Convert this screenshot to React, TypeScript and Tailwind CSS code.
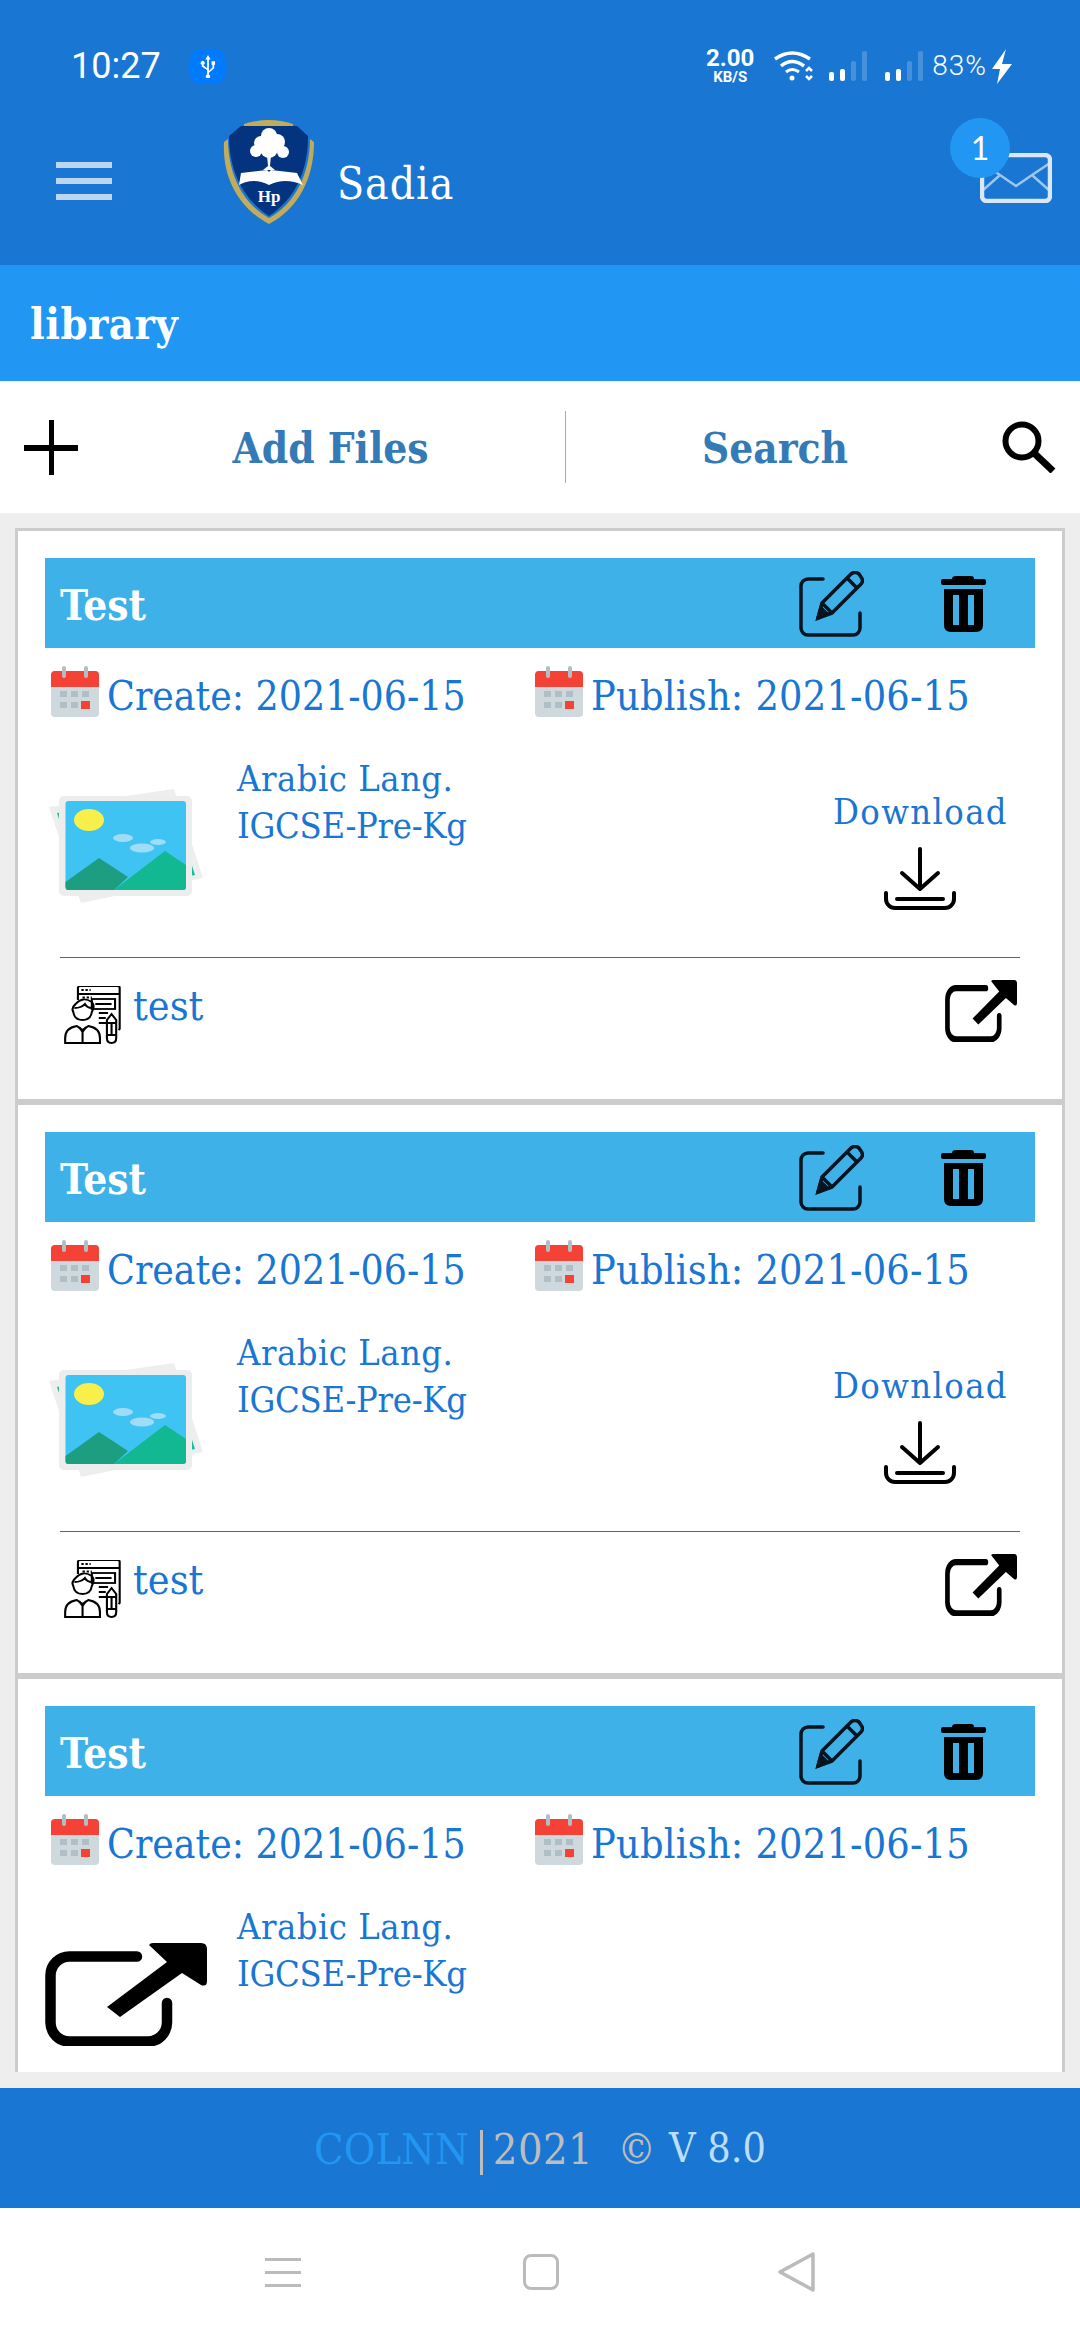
const Logo = () => (
  <svg viewBox="0 0 92 105" className="w-[92px] h-[105px]">
    <path d="M21 5 Q46 -3 70 5 L70 7 L21 7Z" fill="#c2ab5b" />
    <path d="M1 23 L5 20 C5 55 20 85 46 99 C72 85 87 55 87 20 L91 23 C91 60 75 90 46 105 C17 90 -1 60 1 23Z" fill="#c2ab5b" />
    <path d="M6 17 L18 7 L74 7 L85 17 C85 52 72 80 46 97 C20 80 6 52 6 17Z" fill="#04347f" />
    <g fill="#fff">
      <circle cx="46" cy="17" r="8" />
      <circle cx="38" cy="24" r="7" />
      <circle cx="54" cy="23" r="8" />
      <circle cx="33" cy="32" r="6" />
      <circle cx="60" cy="33" r="6" />
      <circle cx="46" cy="30" r="9" />
      <path d="M44 36 L48 36 L47 47 L52 51 L40 51 L45 47Z" />
      <path d="M18 54 L44 51 L46 53 L48 51 L74 54 L80 66 Q62 58 46 66 Q30 58 16 66Z" />
    </g>
    <text x="46" y="83" textAnchor="middle" fontSize="17" fill="#fff" fontFamily="'Liberation Serif',serif" fontWeight="700">Hp</text>
  </svg>
);

const Signal = () => (
  <div className="flex items-end gap-[6px] h-[30px]">
    <div className="w-[5px] h-[9px] rounded-[2px] bg-white" />
    <div className="w-[5px] h-[12px] rounded-[2px] bg-white" />
    <div className="w-[5px] h-[20px] rounded-[2px] bg-white/20" />
    <div className="w-[5px] h-[30px] rounded-[2px] bg-white/20" />
  </div>
);

const StatusBar = () => (
  <div className="flex items-center h-[62px] mt-[35px] pl-[71px] text-white font-['Roboto',sans-serif]">
    <span className="text-[36px] leading-none w-[119px]">10:27</span>
    <div className="w-[35px] h-[35px] rounded-[10px] bg-[#007aff] flex items-center justify-center">
      <svg viewBox="0 0 18 26" className="w-[16px] h-[23px]" fill="#fff">
        <path d="M9 0 L12 5 L10 5 L10 18 L14 14 L14 11 L13 11 L13 7 L17 7 L17 11 L16 11 L16 15 L10 20 L10 22 A2.500 2.500 0 1 1 8 22 L8 17 L2 13 L2 11 A2.200 2.200 0 1 1 4 11 L4 12 L8 15 L8 5 L6 5Z" />
      </svg>
    </div>
    <div className="flex flex-col items-center ml-auto w-[48px] font-bold">
      <span className="text-[24px] leading-[23px]">2.00</span>
      <span className="text-[15px] leading-[15px]">KB/S</span>
    </div>
    <svg viewBox="0 0 40 30" className="w-[40px] h-[30px] ml-[20px] mr-[15px]" fill="none" stroke="#fff" strokeWidth="3.500">
      <path d="M1 8 Q18 -4 36 8" />
      <path d="M7 15 Q18 6 30 15" />
      <path d="M12 21 Q18 16 25 21" strokeWidth="3" />
      <circle cx="18" cy="27" r="2.500" fill="#fff" stroke="none" />
      <path d="M32 20 L35 17 L38 20 M32 25 L35 28 L38 25" strokeWidth="2.500" />
    </svg>
    <Signal />
    <div className="w-[18px]" />
    <Signal />
    <span className="text-[28px] font-light leading-none ml-[9px] tracking-[1px]">83%</span>
    <svg viewBox="0 0 20 35" className="w-[20px] h-[35px] ml-[5px] mr-[68px]" fill="#fff">
      <path d="M14 0 L10 15 L20 15 L5 35 L8 20 L0 20Z" />
    </svg>
  </div>
);

const Toolbar = () => (
  <div className="flex items-center h-[168px] pl-[56px] pr-[28px] text-white">
    <div className="flex flex-col gap-[10px] w-[56px]">
      <div className="h-[6px] bg-[#bcd5f0]" />
      <div className="h-[6px] bg-[#bcd5f0]" />
      <div className="h-[6px] bg-[#bcd5f0]" />
    </div>
    <div className="ml-[111px] mb-[19px]">
      <Logo />
    </div>
    <span className="ml-[22px] mt-[5px] text-[44px] tracking-[1px] font-['DejaVu_Serif_Condensed',serif]">Sadia</span>
    <div className="relative ml-auto mt-[-18px]">
      <svg viewBox="0 0 72 50" className="w-[72px] h-[50px] mt-[12px]" fill="none" stroke="#d9e8f8" strokeWidth="4.500">
        <rect x="2" y="2" width="68" height="46" rx="5" />
        <path d="M2 38 L20 22 L36 33 L52 22 L70 38 M2 10 L20 22 M70 10 L52 22" strokeWidth="2.500" opacity="0.7" />
      </svg>
      <div className="absolute left-[-30px] top-[-23px] w-[60px] h-[60px] rounded-full bg-[#2196f3] flex items-center justify-center text-[32px] font-['Lato',sans-serif]">
        1
      </div>
    </div>
  </div>
);

const Calendar = () => (
  <svg viewBox="0 0 50 51" className="w-[50px] h-[51px] shrink-0">
    <rect x="1" y="5" width="48" height="46" rx="4" fill="#cfd8dc" />
    <path d="M1 21 V9 a4 4 0 0 1 4 -4 H45 a4 4 0 0 1 4 4 V21Z" fill="#f44336" />
    <rect x="12" y="0" width="4" height="12" rx="2" fill="#b0bec5" />
    <rect x="34" y="0" width="4" height="12" rx="2" fill="#b0bec5" />
    <g fill="#b0bec5">
      <rect x="10" y="25" width="7" height="6" />
      <rect x="21" y="25" width="7" height="6" />
      <rect x="32" y="25" width="7" height="6" />
      <rect x="10" y="36" width="7" height="6" />
      <rect x="21" y="36" width="7" height="6" />
    </g>
    <rect x="31" y="35" width="9" height="8" fill="#f44336" />
  </svg>
);

const Gallery = () => (
  <svg viewBox="0 0 165 125" className="w-[165px] h-[125px] mt-[55px]">
    <path d="M4 22 L129 4 L158 93 L36 118Z" fill="#eeeeee" />
    <path d="M12 28 L125 12 L150 90 L40 110Z" fill="#1abc9c" />
    <rect x="14" y="11" width="133" height="100" rx="5" fill="#ededed" />
    <rect x="20.500" y="16" width="120.500" height="89" rx="3" fill="#3fc3f3" />
    <ellipse cx="44" cy="35" rx="15" ry="11" fill="#f8ef4a" />
    <ellipse cx="78" cy="53" rx="10" ry="4" fill="#9fdcf6" />
    <ellipse cx="97" cy="63" rx="12" ry="4.500" fill="#9fdcf6" />
    <ellipse cx="113" cy="57" rx="8" ry="3" fill="#9fdcf6" />
    <path d="M20.500 97 L54 73 L83 92 L69 105 L23 105 Q20.500 105 20.500 102Z" fill="#1d9e81" />
    <path d="M69 105 L120 66 L141 80 L141 102 Q141 105 138 105Z" fill="#12b892" />
  </svg>
);

const Teacher = () => (
  <svg viewBox="0 0 50 58" preserveAspectRatio="none" className="w-[58px] h-[58px] shrink-0" fill="none" stroke="#000" strokeWidth="1.800">
    <path d="M12 14 V2 a2 2 0 0 1 2 -2 H46 a2 2 0 0 1 2 2 V43 L47 44" />
    <path d="M12 8 H48" />
    <path d="M15 4 H23 M16 11.500 H24" strokeDasharray="2 1.500" />
    <rect x="24" y="13" width="20" height="10" />
    <path d="M27 18 H41 M30 27 H38 M30 32 H36 M30 37 H37" />
    <path d="M10 18 Q16 10 24 16 Q27 20 24 26 Q23 34 16 34 Q9 34 8 26 Q6 22 10 18Z" />
    <path d="M9 22 Q15 22 18 18 Q20 22 24 22" />
    <path d="M1 57 V52 Q1 42 11 40 L16 44 L21 40 Q31 42 31 52 V57Z" />
    <path d="M13 41 L16 46 L19 41 M16 46 V57" />
    <path d="M37 34 L41 28 L45 34 V52 Q45 57 41 57 Q37 57 37 52Z" />
    <path d="M37 37 H45 M37 49 H45 M41 37 V49" />
  </svg>
);

const Share = ({ className }: { className: string }) => (
  <svg viewBox="0 0 162 103" preserveAspectRatio="none" className={className}>
    <path d="M92 13.500 H25 a19 19 0 0 0 -19.500 19 V79 a19 19 0 0 0 19.500 19.500 H103 a19 19 0 0 0 19 -19.500 V60" fill="none" stroke="#000" strokeWidth="10.500" strokeLinecap="round" />
    <path d="M104 2 Q105 0 108 0 H156 Q162 0 162 6 V38 Q162 44 156 42 L137 30 L75 74 L62 64 L122 19Z" fill="#000" />
  </svg>
);

const Edit = () => (
  <svg viewBox="0 0 65 66" className="w-[65px] h-[66px]" fill="none" stroke="#05141f" strokeWidth="3.500">
    <path d="M24 8 H9 a7 7 0 0 0 -7 7 V57 a7 7 0 0 0 7 7 H54 a7 7 0 0 0 7 -7 V42" strokeLinecap="round" />
    <path d="M19 47 L23 32 L52 3 Q56 0 60 3 L62 6 Q65 10 62 13 L33 42Z M23 32 L33 42 M48 7 L58 17" strokeLinejoin="round" />
    <path d="M19 47 L22 37 L28 43Z" fill="#05141f" />
  </svg>
);

const Trash = () => (
  <svg viewBox="0 0 45 56" className="w-[45px] h-[56px]">
    <path d="M11 3 Q11 0 15 0 H30 Q33 0 33 3Z" fill="#000" />
    <rect x="0" y="3" width="45" height="6" rx="2" fill="#000" />
    <path fillRule="evenodd" d="M3 13 H42 V49 Q42 56 35 56 H10 Q3 56 3 49Z M12 19 V49 H18 V19Z M27 19 V49 H33 V19Z" fill="#000" />
  </svg>
);

const Download = () => (
  <svg viewBox="0 0 72 63" className="w-[72px] h-[63px]" fill="none" stroke="#000" strokeWidth="4" strokeLinecap="round" strokeLinejoin="round">
    <path d="M36 2 V42 M18 26 L36 42 L54 26" />
    <path d="M2 46 V52 a9 9 0 0 0 9 9 H61 a9 9 0 0 0 9 -9 V46" />
    <path d="M13 52 H59" />
  </svg>
);

const serif = "font-['DejaVu_Serif_Condensed',serif]";

const FileCard = ({ clipped }: { clipped?: boolean }) => (
  <div className="h-[574px] shrink-0 border-[3px] border-[#ccc] bg-white px-[27px] pt-[27px]">
    <div className="flex items-center h-[90px] bg-[#3fb1e9] pl-[15px] pr-[49px]">
      <span className={`${serif} text-white font-bold text-[42px] leading-none mt-[5px]`}>Test</span>
      <div className="ml-auto mt-[2px]">
        <Edit />
      </div>
      <div className="ml-[77px] mt-[2px]">
        <Trash />
      </div>
    </div>
    <div className="grid grid-cols-[489px_1fr] h-[82px] pt-[18px] text-[#1976d2] leading-[61px]">
      <div className="flex gap-[7px] pl-[5px]">
        <Calendar />
        <span className={`${serif} whitespace-nowrap text-[40.5px]`}>Create: 2021-06-15</span>
      </div>
      <div className="flex gap-[7px]">
        <Calendar />
        <span className={`${serif} whitespace-nowrap text-[41px] tracking-[0.2px]`}>Publish: 2021-06-15</span>
      </div>
    </div>
    <div className="flex h-[227px]">
      <div className="w-[192px] shrink-0">
        {clipped ? <Share className="w-[162px] h-[103px] mt-[65px] block" /> : <Gallery />}
      </div>
      <div className={`${serif} text-[#1976d2] text-[36px] leading-[46px] pt-[26px]`}>
        <div className="tracking-[0.5px]">Arabic Lang.</div>
        <div className="tracking-[-0.3px] mt-[1px]">IGCSE-Pre-Kg</div>
      </div>
      {!clipped && (
        <div className="ml-auto mr-[27px] flex flex-col items-center pt-[59px]">
          <span className={`${serif} text-[#1976d2] text-[36px] tracking-[1.4px] leading-[46px]`}>Download</span>
          <div className="mt-[12px]">
            <Download />
          </div>
        </div>
      )}
    </div>
    {!clipped && (
      <div className="mx-[15px] border-t border-[#1976d2] pt-[28px] flex items-start">
        <div className="ml-[4px]">
          <Teacher />
        </div>
        <span className={`${serif} ml-[11px] text-[#1976d2] text-[41px] leading-[40px]`}>test</span>
        <div className="ml-auto mr-[3px] mt-[-6px]">
          <Share className="w-[72px] h-[62px] block" />
        </div>
      </div>
    )}
  </div>
);

export default function App() {
  return (
    <div className="w-[1080px] h-[2340px] flex flex-col overflow-hidden bg-white">
      <div className="h-[265px] shrink-0 bg-[#1976d2] flex flex-col">
        <StatusBar />
        <Toolbar />
      </div>
      <div className="h-[116px] shrink-0 bg-[#2196f3] flex items-center pl-[30px]">
        <span className={`${serif} text-white font-bold text-[43px] tracking-[0.5px] mt-[3px]`}>library</span>
      </div>
      <div className="h-[132px] shrink-0 bg-white flex items-center relative">
        <svg viewBox="0 0 54 55" className="w-[54px] h-[55px] ml-[24px] shrink-0" fill="#000">
          <rect x="0" y="25" width="54" height="6" />
          <rect x="25" y="0" width="5" height="55" />
        </svg>
        <div className={`${serif} flex-1 text-center text-[#337ab7] font-bold text-[42px] ml-[18px] mt-[3px]`}>Add Files</div>
        <div className="w-[1px] h-[72px] bg-[#aaa] shrink-0" />
        <div className={`${serif} w-[418px] text-center text-[#337ab7] font-bold text-[42px] mt-[3px]`}>Search</div>
        <svg viewBox="0 0 54 52" className="w-[54px] h-[52px] ml-[18px] mr-[24px] shrink-0" fill="none" stroke="#000">
          <circle cx="20" cy="20" r="16.500" strokeWidth="6" />
          <path d="M32 32 L51 50" strokeWidth="7" />
        </svg>
      </div>
      <div className="h-[1575px] shrink-0 bg-[#eee] py-[15px] px-[15px]">
        <div className="h-[1544px] overflow-hidden flex flex-col">
          <FileCard />
          <FileCard />
          <FileCard clipped />
        </div>
      </div>
      <div className={`${serif} h-[120px] shrink-0 bg-[#1976d2] flex items-center justify-center text-[43px] text-[#bdbdbd]`}>
        <span className="text-[#2196f3] mt-[2px]">COLNN</span>
        <span className="w-[3px] h-[45px] bg-[#bdbdbd] ml-[11px] mr-[10px] mt-[8px]" />
        <span className="mt-[2px] tracking-[0.5px]">2021</span>
        <span className="ml-[24px] mt-[2px]">©</span>
        <span className="ml-[13px] mt-[2px] text-[41px] text-[#bbdefb]">V 8.0</span>
      </div>
      <div className="flex-1 bg-white flex items-center justify-center pb-[4px]">
        <div className="flex flex-col gap-[10px] w-[36px]">
          <div className="h-[3px] bg-[#bbb]" />
          <div className="h-[3px] bg-[#bbb]" />
          <div className="h-[3px] bg-[#bbb]" />
        </div>
        <div className="w-[36px] h-[36px] ml-[222px] border-[3px] border-[#bbb] rounded-[8px]" />
        <svg viewBox="0 0 38 40" className="w-[38px] h-[40px] ml-[219px]" fill="none" stroke="#bbb" strokeWidth="3.500" strokeLinejoin="round">
          <path d="M35 2 L2 20 L35 38Z" />
        </svg>
      </div>
    </div>
  );
}
